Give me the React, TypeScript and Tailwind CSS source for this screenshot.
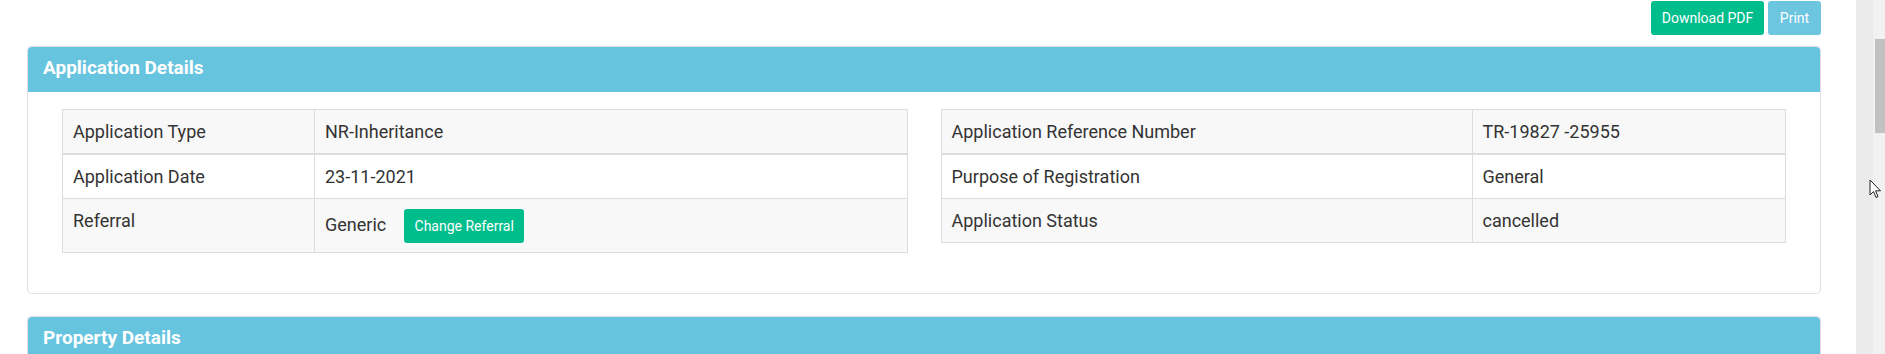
import type { ReactNode } from "react";

type Row = { label: string; value: ReactNode };

const leftRows: Row[] = [
  { label: "Application Type", value: "NR-Inheritance" },
  { label: "Application Date", value: "23-11-2021" },
  {
    label: "Referral",
    value: (
      <div className="flex items-baseline">
        <span>Generic</span>
        <button
          type="button"
          className="ml-[18px] h-[34px] w-[120px] rounded-[3px] bg-[#00bd8c] text-[14px] leading-[34px] text-white"
        >
          Change Referral
        </button>
      </div>
    ),
  },
];

const rightRows: Row[] = [
  { label: "Application Reference Number", value: "TR-19827 -25955" },
  { label: "Purpose of Registration", value: "General" },
  { label: "Application Status", value: "cancelled" },
];

function DetailTable({ rows, labelWidth }: { rows: Row[]; labelWidth: string }) {
  return (
    <table className="w-full table-fixed border-collapse text-[18px] leading-[24px] text-[#333]">
      <colgroup>
        <col className={labelWidth} />
        <col />
      </colgroup>
      <tbody>
        {rows.map((row, i) => (
          <tr
            key={row.label}
            className={`${i % 2 === 0 ? "bg-[#f8f8f8]" : "bg-white"} ${
              i === 0 ? "border-b-2" : "border-b"
            } border-[#dddddd]`}
          >
            <td className="border-x border-t border-[#dddddd] px-[10px] pt-[10px] pb-[9px] align-top">
              {row.label}
            </td>
            <td className="border-x border-t border-[#dddddd] px-[10px] pt-[10px] pb-[9px] align-top">
              {row.value}
            </td>
          </tr>
        ))}
      </tbody>
    </table>
  );
}

function PanelHeader({ title }: { title: string }) {
  return (
    <div className="h-[45px] rounded-t-[4px] bg-[#67c4df] px-[15px] pt-[9px] text-[19px] font-bold leading-[24px] text-white">
      {title}
    </div>
  );
}

export default function App() {
  return (
    <div className="relative flex h-[354px] w-[1885px] overflow-hidden bg-white font-['Roboto',sans-serif]">
      <main className="flex-1 pl-[27px] pr-[35px] pt-px">
        <div className="flex justify-end gap-[4px]">
          <button
            type="button"
            className="h-[34px] w-[113px] rounded-[3px] bg-[#00bd8c] text-[14px] text-white"
          >
            Download PDF
          </button>
          <button
            type="button"
            className="h-[34px] w-[53px] rounded-[3px] bg-[#6cc6e0] text-[14px] text-white"
          >
            Print
          </button>
        </div>

        <section className="mt-[11px] rounded-[4px] border border-[#e2e0e6] bg-white">
          <PanelHeader title="Application Details" />
          <div className="grid grid-cols-2 items-start gap-[33px] px-[34px] pt-[17px] pb-[40px]">
            <DetailTable rows={leftRows} labelWidth="w-[252px]" />
            <DetailTable rows={rightRows} labelWidth="w-[531px]" />
          </div>
        </section>

        <section className="mt-[22px] rounded-[4px] border border-[#e2e0e6] bg-white">
          <PanelHeader title="Property Details" />
          <div className="h-[60px]" />
        </section>
      </main>

      <div className="w-[17px] bg-[#ebebeb]" />
      <div className="relative w-[12px] bg-[#f1f1f1]">
        <div className="absolute left-[2px] top-[39px] h-[94px] w-[10px] bg-[#c1c1c1]" />
      </div>

      <svg
        className="absolute left-[1869px] top-[179px]"
        width="14"
        height="21"
        viewBox="0 0 14 21"
      >
        <path
          d="M1 1 L1 16 L4.5 12.5 L7 18.5 L9 17.6 L6.6 11.8 L11.5 11.8 Z"
          fill="white"
          stroke="#222"
          strokeWidth="1"
          strokeLinejoin="round"
        />
      </svg>
    </div>
  );
}
